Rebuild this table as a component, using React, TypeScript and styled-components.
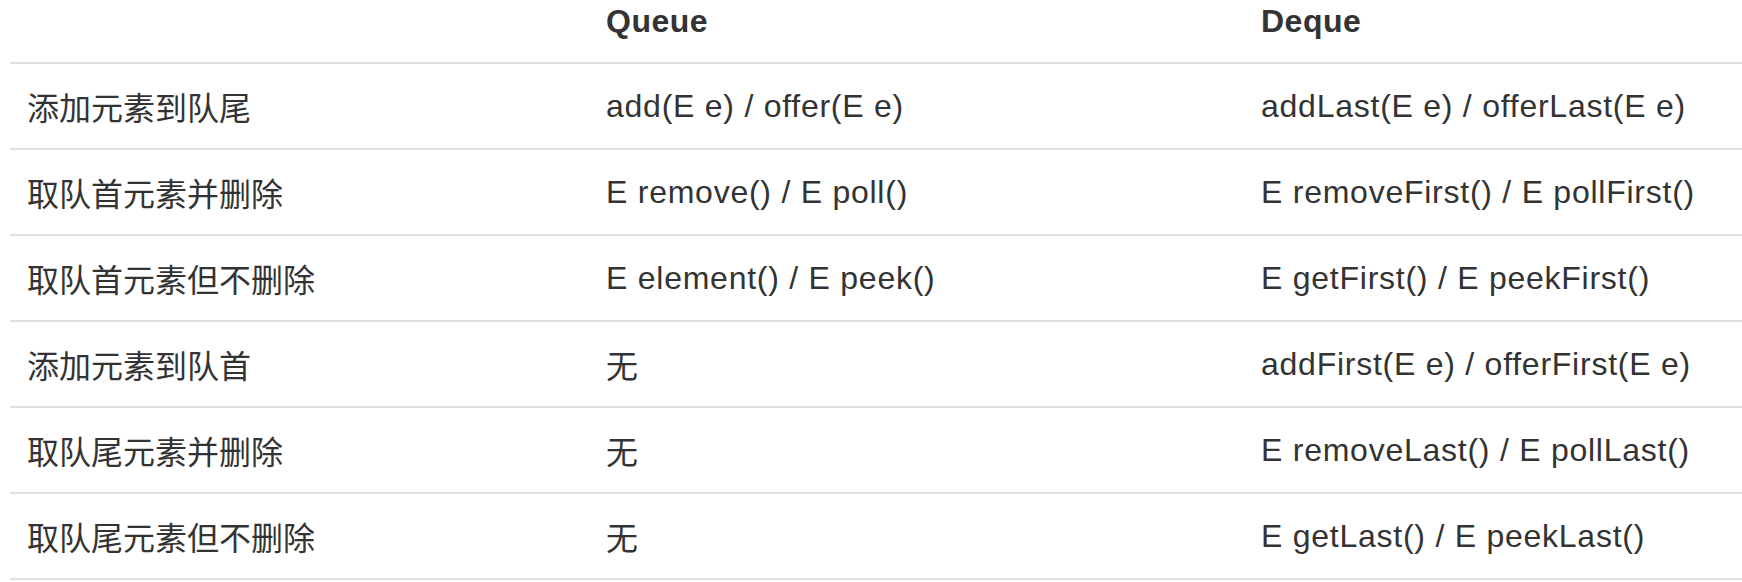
import styled, { createGlobalStyle } from 'styled-components'

const GlobalStyle = createGlobalStyle`
  html, body {
    margin: 0;
    padding: 0;
    background: #ffffff;
  }
  body {
    font-family: "Liberation Sans", "Noto Sans CJK SC", sans-serif;
    color: #333333;
    overflow: hidden;
  }
`

const Table = styled.table`
  margin-left: 10px;
  width: 1732px;
  border-collapse: collapse;
  table-layout: fixed;
  font-size: 32px;
`

const HeadCell = styled.th`
  height: 63px;
  padding: 0 17px 20px;
  box-sizing: border-box;
  text-align: left;
  font-weight: 700;
  letter-spacing: 0.5px;
  vertical-align: middle;
  border-bottom: 2px solid #e0e0e0;
`

const Row = styled.tr`
  border-bottom: 2px solid #e0e0e0;
`

const Cell = styled.td<{ $latin?: boolean }>`
  height: 86px;
  padding: 0 17px;
  box-sizing: border-box;
  vertical-align: middle;
  white-space: nowrap;
  letter-spacing: ${(p) => (p.$latin ? '0.75px' : '0')};
  font-weight: 400;
`

const rows = [
  ['添加元素到队尾', 'add(E e) / offer(E e)', 'addLast(E e) / offerLast(E e)'],
  ['取队首元素并删除', 'E remove() / E poll()', 'E removeFirst() / E pollFirst()'],
  ['取队首元素但不删除', 'E element() / E peek()', 'E getFirst() / E peekFirst()'],
  ['添加元素到队首', '无', 'addFirst(E e) / offerFirst(E e)'],
  ['取队尾元素并删除', '无', 'E removeLast() / E pollLast()'],
  ['取队尾元素但不删除', '无', 'E getLast() / E peekLast()']
]

export default function App() {
  return (
    <>
      <GlobalStyle />
      <Table>
        <colgroup>
          <col style={{ width: 579 }} />
          <col style={{ width: 655 }} />
          <col />
        </colgroup>
        <thead>
          <tr>
            <HeadCell></HeadCell>
            <HeadCell>Queue</HeadCell>
            <HeadCell>Deque</HeadCell>
          </tr>
        </thead>
        <tbody>
          {rows.map((r) => (
            <Row key={r[0]}>
              <Cell>{r[0]}</Cell>
              <Cell $latin={r[1] !== '无'}>{r[1]}</Cell>
              <Cell $latin>{r[2]}</Cell>
            </Row>
          ))}
        </tbody>
      </Table>
    </>
  )
}
